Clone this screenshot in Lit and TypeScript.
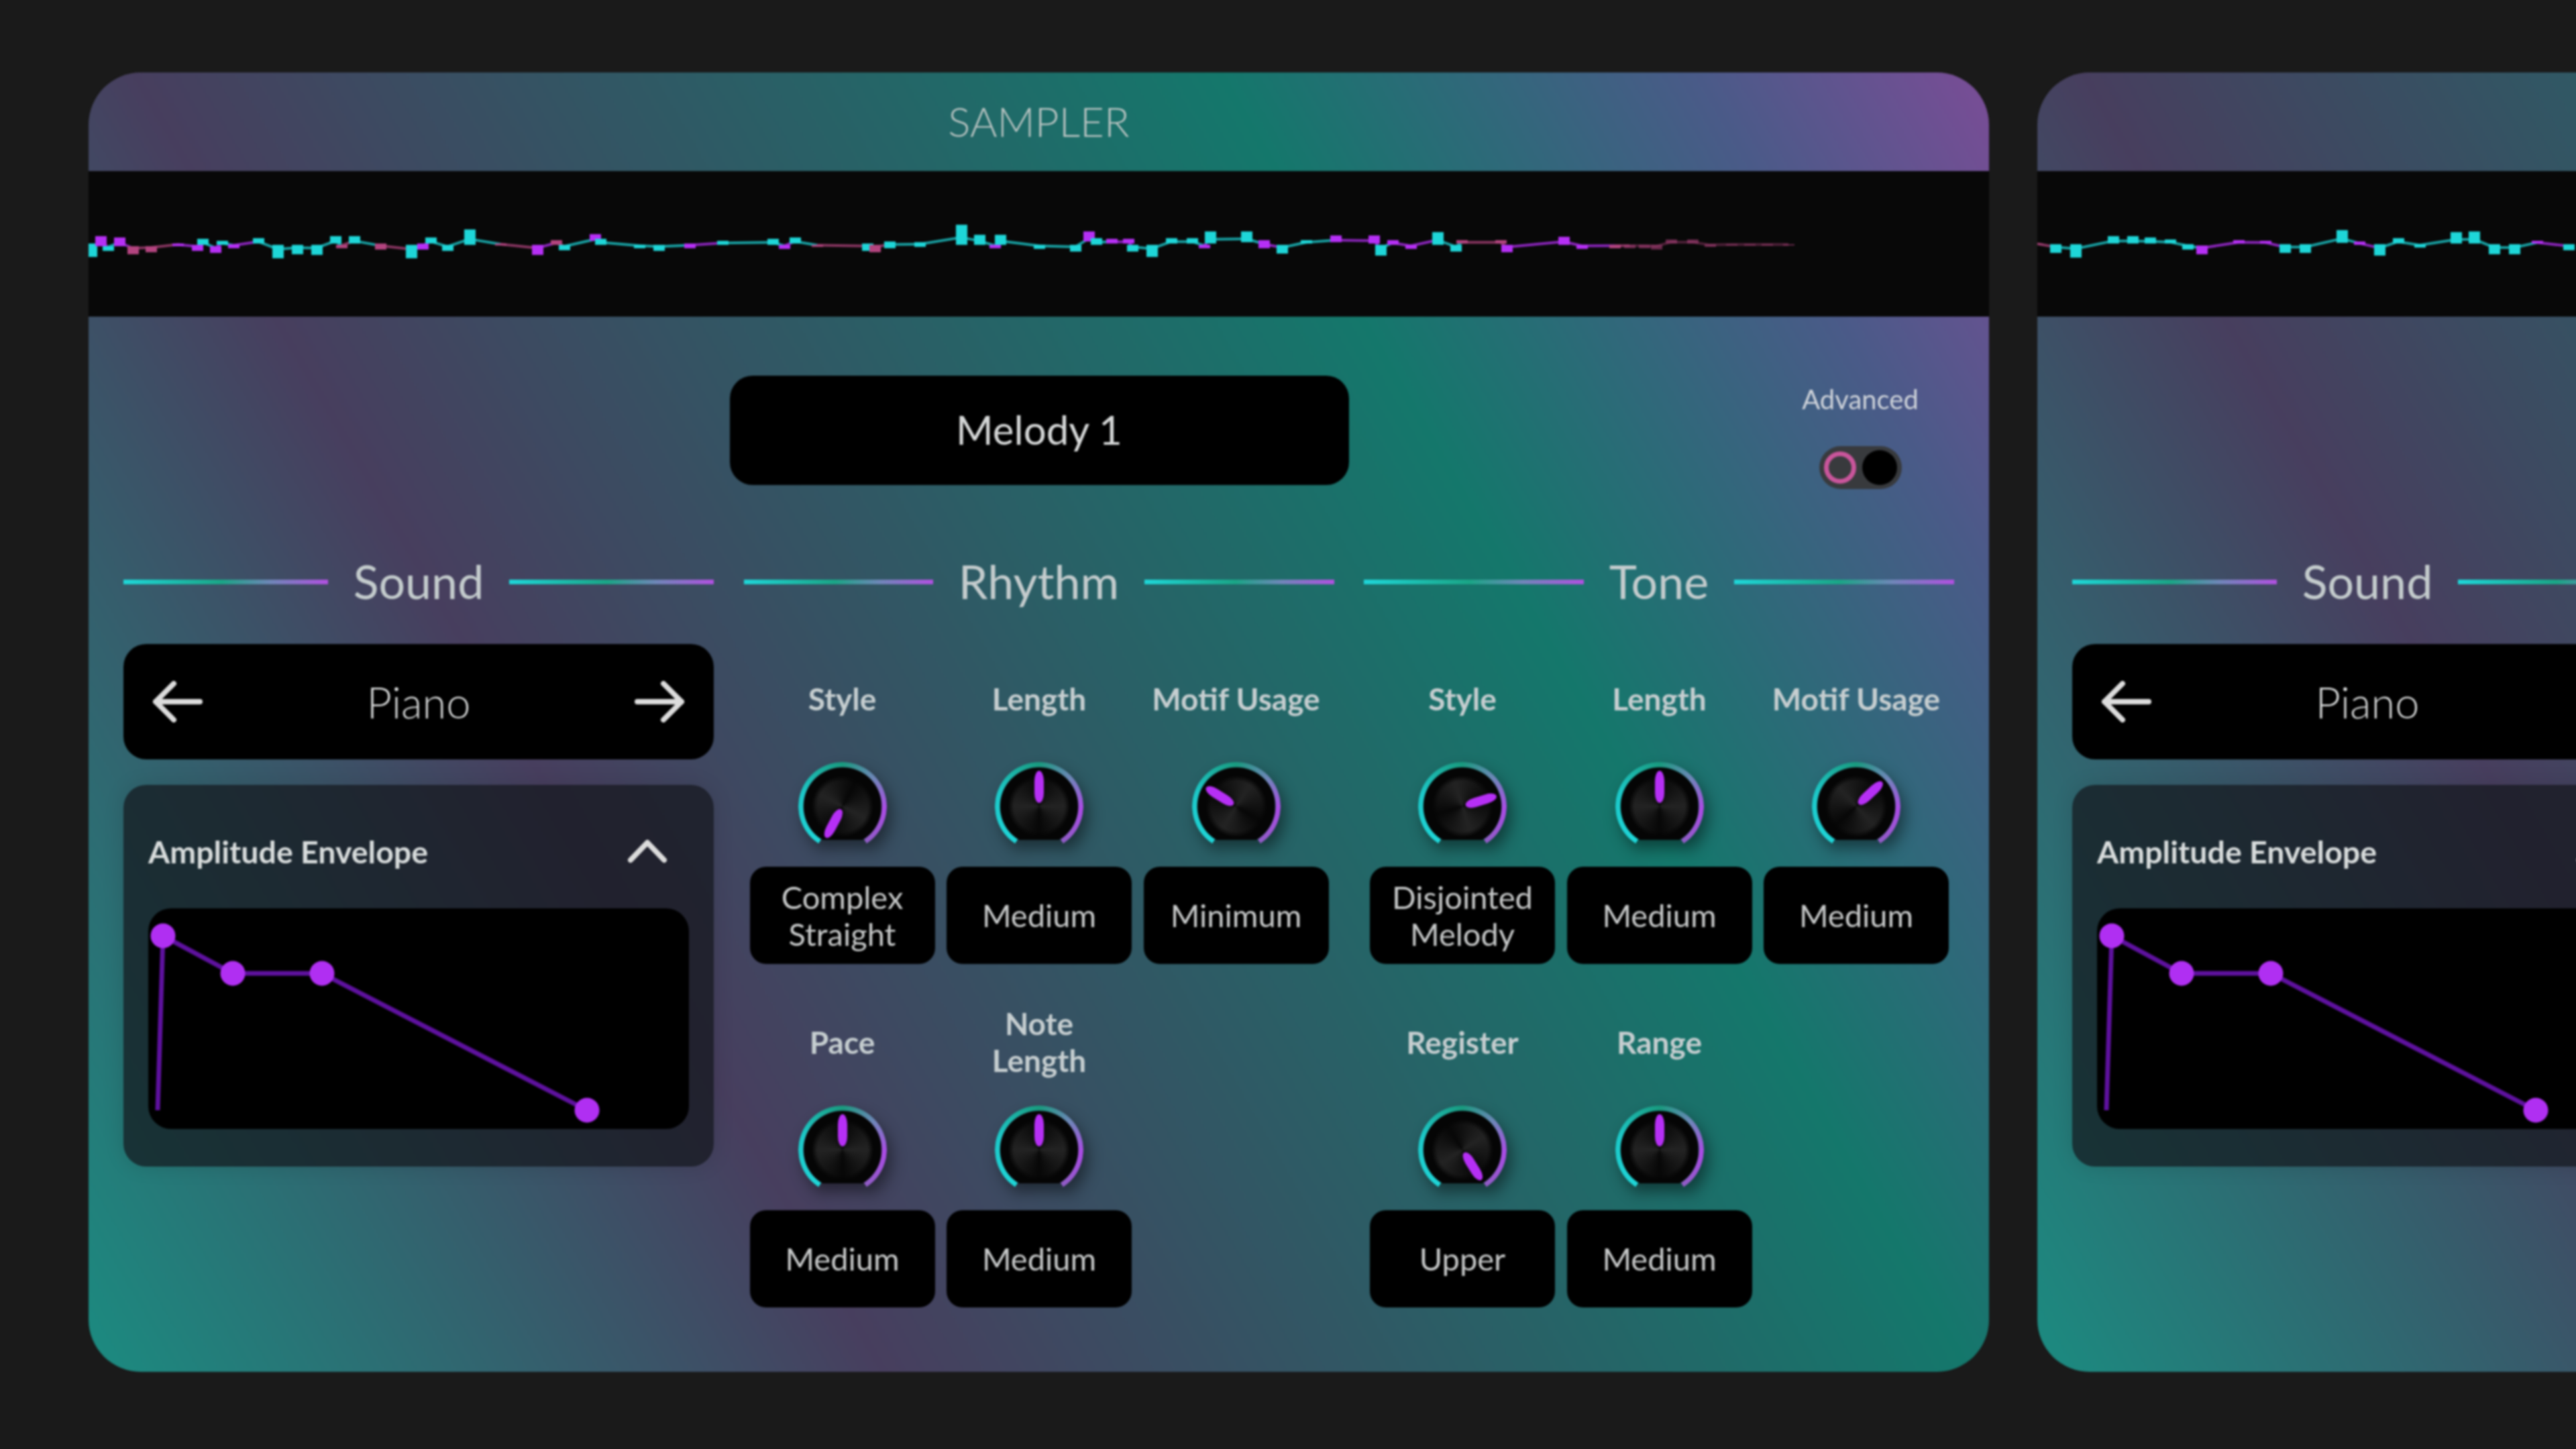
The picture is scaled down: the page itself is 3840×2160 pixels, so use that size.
import { LitElement, css, html, svg } from "lit";
import { customElement, property } from "lit/decorators.js";

type Bar = [x: number, top: number, bottom: number, color: string];

const C = "#1ed6d8";
const P = "#b62ff5";
const K = "#b3447f";

const WAVE_A: Bar[] = [
  [4, 0, 20, C], [18, -11, 4, P], [29, 4, 11, C], [46, -9, 4, P], [66, 4, 16, K], [93, 4, 13, K],
  [133, 0, 4, P], [162, 2, 11, P], [170, -7, 2, C], [189, 4, 14, P], [199, -4, 2, C], [216, 1, 7, P],
  [253, -8, 0, C], [282, 2, 22, C], [311, 2, 16, C], [340, 2, 17, C], [368, -11, 0, C], [377, 2, 7, K],
  [396, -11, 0, C], [435, 0, 9, K], [481, 2, 22, C], [498, 0, 9, P], [510, -9, 0, C], [535, 2, 11, C],
  [568, -21, 2, C], [614, 0, 3, K], [669, 2, 17, P], [697, -5, 2, K], [709, 2, 10, C], [755, -14, -4, P],
  [763, -7, 2, C], [821, 2, 7, C], [850, 2, 11, C], [896, 0, 7, P], [945, -4, 2, C], [1020, -7, 2, C],
  [1037, 2, 8, P], [1053, -9, 0, C], [1086, 2, 5, K], [1161, 0, 11, C],
  [1172, 2, 13, K], [1194, -3, 7, C], [1239, -2, 5, C], [1301, -28, 2, C], [1328, -13, 2, C], [1351, 2, 7, P],
  [1359, -13, 2, C], [1417, 2, 8, C], [1471, 2, 12, C], [1491, -18, -3, P], [1502, -8, 2, C], [1525, -7, 0, P],
  [1550, -7, 0, P], [1556, 2, 12, C], [1585, 2, 20, C], [1614, -8, 0, C], [1645, -8, 0, C], [1663, 2, 7, P],
  [1672, -18, 0, C], [1726, -18, -2, C], [1752, -5, 7, P], [1779, 2, 15, C], [1815, -5, 0, C], [1859, -12, -2, P],
  [1916, -12, 0, P], [1926, 2, 18, C], [1944, -5, 2, P], [1971, 2, 8, P], [2011, -17, 2, C], [2038, 2, 12, C],
  [2047, -5, 0, K], [2105, -5, 0, K], [2114, 2, 13, P], [2199, -10, 2, P], [2226, 2, 8, P], [2275, 2, 7, K],
  [2297, 2, 7, K], [2319, 2, 7, K], [2337, 2, 9, K], [2359, -6, 0, K], [2391, -6, 0, K], [2417, 1, 5, K],
  [2449, 1, 3, K], [2476, 1, 3, K], [2502, 1, 3, K], [2534, 1, 3, K],
];

const WAVE_B: Bar[] = [
  [0, 0, 1, K], [27, 1, 14, C], [57, 1, 21, C], [113, -11, 0, C], [142, -11, 0, C], [168, -9, 0, C], [198, -6, 0, C],
  [224, 1, 9, C], [245, 3, 16, P], [300, -5, 0, P], [340, -4, 0, P], [369, 1, 14, C], [399, 1, 14, C],
  [454, -20, -1, C], [480, -3, 2, P], [510, 1, 18, C], [538, -8, 0, C], [570, 1, 6, C], [624, -17, 0, C],
  [651, -18, 0, C], [681, 1, 16, C], [711, 1, 16, C], [745, -4, 0, P], [792, 1, 10, C],
];

@customElement("wave-strip")
class WaveStrip extends LitElement {
  @property({ attribute: false }) bars: Bar[] = [];

  static styles = css`
    :host {
      display: block;
      height: 217px;
      background: #080808;
    }
    svg {
      display: block;
      width: 100%;
      height: 100%;
    }
    .link {
      fill: none;
      stroke-width: 4;
    }
  `;

  render() {
    const mid = 108;
    return html`<svg viewBox="0 0 2833 217" preserveAspectRatio="none">
      ${this.bars.map(([x, top, bottom, color], i) => {
        const next = this.bars[i + 1];
        const y = mid + (top + bottom) * 0.35;
        // the tail of the sample dies away
        const fade = x > 2280 ? 0.55 : 1;
        const link = next
          ? svg`<line class="link" x1=${x} y1=${y} x2=${next[0]} y2=${mid + (next[1] + next[2]) * 0.35} stroke=${color} opacity=${0.75 * fade}></line>`
          : null;
        return svg`${link}<rect x=${x - 8} y=${mid + top} width="17" height=${bottom - top} fill=${color} opacity=${fade}></rect>`;
      })}
    </svg>`;
  }
}

@customElement("dial-knob")
class DialKnob extends LitElement {
  @property({ type: Number }) angle = 0;

  static styles = css`
    :host {
      display: block;
      position: relative;
      width: 132px;
      height: 132px;
      filter: drop-shadow(7px 12px 11px rgba(0, 0, 0, 0.45));
    }
    .ring {
      position: absolute;
      inset: 0;
      border-radius: 50%;
      background: conic-gradient(
        from 213deg,
        #1ed6d8 0deg,
        #1cc8c8 75deg,
        #189a7e 147deg,
        #6f86b8 195deg,
        #ab4be6 240deg,
        #8f5cc4 294deg,
        transparent 294deg
      );
      -webkit-mask: radial-gradient(closest-side, transparent calc(100% - 8px), #000 calc(100% - 7px));
      mask: radial-gradient(closest-side, transparent calc(100% - 8px), #000 calc(100% - 7px));
    }
    .body {
      position: absolute;
      inset: 8px;
      border-radius: 50%;
      background: #050505;
      overflow: hidden;
      clip-path: inset(0 0 8px 0);
    }
    .cap {
      position: absolute;
      inset: 12px;
      border-radius: 50%;
      background: conic-gradient(#070707 0deg, #232323 90deg, #070707 180deg, #232323 270deg, #070707 360deg);
      -webkit-mask: radial-gradient(closest-side, #000 82%, transparent 100%);
      mask: radial-gradient(closest-side, #000 82%, transparent 100%);
    }
    .arm {
      position: absolute;
      inset: 0;
    }
    .pointer {
      position: absolute;
      left: 50%;
      top: 13px;
      width: 14px;
      height: 48px;
      margin-left: -7px;
      border-radius: 7px / 15px;
      background: #b62ff5;
    }
  `;

  render() {
    const turn = `transform: rotate(${this.angle}deg)`;
    return html`
      <div class="ring"></div>
      <div class="body"><div class="cap" style=${turn}></div></div>
      <div class="arm" style=${turn}><div class="pointer"></div></div>
    `;
  }
}

@customElement("sampler-card")
class SamplerCard extends LitElement {
  @property({ attribute: false }) wave: Bar[] = [];
  // the next card only peeks in at the page edge, so only its first column is drawn
  @property({ type: Boolean }) peek = false;

  static styles = css`
    :host {
      display: block;
      flex: 0 0 2833px;
      height: 1937px;
      border-radius: 78px;
      overflow: hidden;
      color: #d6d8d8;
      font-family: Lato, "Open Sans", sans-serif;
      background: linear-gradient(60deg, #1b8b80 0%, #473e5e 30%, #14776b 71%, #4a5a88 89%, #7a4c96 100%);
      filter: blur(1.7px);
    }
    .title {
      height: 147px;
      box-sizing: border-box;
      padding-bottom: 3px;
      display: flex;
      align-items: center;
      justify-content: center;
      font-size: 62px;
      font-weight: 300;
      color: #b9c4c2;
    }
    .body {
      padding: 88px 51px 0 52px;
    }
    .top {
      display: grid;
      grid-template-columns: 1fr 923px 1fr;
      grid-template-rows: 163px;
    }
    .preset {
      grid-column: 2;
      display: flex;
      align-items: center;
      justify-content: center;
      border-radius: 34px;
      background: #000;
      font-size: 60px;
      padding-bottom: 3px;
    }
    .advanced {
      justify-self: end;
      width: 282px;
      display: flex;
      flex-direction: column;
      align-items: center;
      font-size: 40px;
      line-height: 46px;
      color: #ced3da;
      padding-top: 12px;
    }
    .toggle {
      margin-top: 47px;
      width: 123px;
      height: 64px;
      box-sizing: border-box;
      padding: 6px 7px;
      display: flex;
      align-items: center;
      justify-content: space-between;
      border-radius: 32px;
      background: #383a3d;
    }
    .toggle .on {
      width: 48px;
      height: 48px;
      box-sizing: border-box;
      border-radius: 50%;
      border: 7px solid #c9559b;
    }
    .toggle .off {
      width: 52px;
      height: 52px;
      border-radius: 50%;
      background: #000;
    }
    .sections {
      margin-top: 106px;
      display: grid;
      grid-template-columns: repeat(3, 880px);
      column-gap: 44.5px;
    }
    .head {
      height: 74px;
      display: flex;
      align-items: center;
      gap: 38px;
      font-size: 70px;
      color: #c4cccd;
    }
    .head i {
      flex: 1;
      height: 7px;
      margin-top: 2px;
      background: linear-gradient(90deg, #1ed6d8 0%, #1aa586 48%, #6f86b8 72%, #b050e0 100%);
    }
    .bar {
      margin-top: 57px;
      height: 172px;
      padding: 0 43px;
      display: flex;
      align-items: center;
      justify-content: space-between;
      border-radius: 34px;
      background: #000;
      font-size: 65px;
      font-weight: 300;
    }
    .bar svg {
      width: 75px;
      height: 62px;
    }
    .panel {
      margin-top: 38px;
      height: 569px;
      box-sizing: border-box;
      padding: 0 37px;
      border-radius: 34px;
      background: rgba(20, 22, 28, 0.72);
      box-shadow: 0 0 30px rgba(0, 0, 0, 0.12);
    }
    .panel-head {
      height: 184px;
      box-sizing: border-box;
      padding-top: 14px;
      display: flex;
      align-items: center;
      justify-content: space-between;
      font-size: 46.5px;
      font-weight: 700;
      color: #d8dcdc;
    }
    .panel-head svg {
      width: 62px;
      height: 40px;
      margin-right: 31px;
    }
    .plot {
      display: block;
      width: 806px;
      height: 329px;
      border-radius: 34px;
      background: #000;
    }
    .controls {
      margin-top: 83px;
      padding: 0 9px;
      display: grid;
      grid-template-columns: repeat(3, 276px);
      column-gap: 17.5px;
      row-gap: 61px;
    }
    .control {
      display: flex;
      flex-direction: column;
      align-items: center;
    }
    .label {
      height: 110px;
      display: flex;
      align-items: center;
      text-align: center;
      white-space: pre-line;
      font-size: 46px;
      line-height: 55px;
      font-weight: 700;
      color: #c6ced0;
    }
    dial-knob {
      margin: 40px 0 24px;
    }
    .value {
      width: 100%;
      height: 145px;
      display: flex;
      align-items: center;
      justify-content: center;
      text-align: center;
      border-radius: 24px;
      background: #000;
      font-size: 47px;
      line-height: 55px;
      color: #c6c8c8;
    }
  `;

  private section(name: string, body: unknown) {
    return html`<section>
      <div class="head"><i></i><span>${name}</span><i></i></div>
      ${body}
    </section>`;
  }

  private control(label: string, angle: number, value: string) {
    return html`<div class="control">
      <div class="label">${label}</div>
      <dial-knob .angle=${angle}></dial-knob>
      <div class="value">${value}</div>
    </div>`;
  }

  private sound() {
    const arrow = "fill:none;stroke:#dcdcdc;stroke-width:8;stroke-linecap:round;stroke-linejoin:round";
    return this.section(
      "Sound",
      html`
        <div class="bar">
          <svg viewBox="0 0 75 62"><path style=${arrow} d="M71 31H5M32 4 5 31l27 27"></path></svg>
          <span>Piano</span>
          <svg viewBox="0 0 75 62"><path style=${arrow} d="M4 31h66M43 4l27 27-27 27"></path></svg>
        </div>
        <div class="panel">
          <div class="panel-head">
            Amplitude Envelope
            <svg viewBox="0 0 62 40"><path style=${arrow} d="M6 33 31 7l25 26"></path></svg>
          </div>
          <svg class="plot" viewBox="0 0 806 329">
            <path d="M14 301 22 41 126 97H259L654 301" fill="none" stroke="#5e119e" stroke-width="7"></path>
            <circle cx="22" cy="41" r="18.5" fill="#b02ff2"></circle>
            <circle cx="126" cy="97" r="18.5" fill="#b02ff2"></circle>
            <circle cx="259" cy="97" r="18.5" fill="#b02ff2"></circle>
            <circle cx="654" cy="301" r="18.5" fill="#b02ff2"></circle>
          </svg>
        </div>
      `
    );
  }

  render() {
    if (this.peek) {
      return html`
        <div class="title"></div>
        <wave-strip .bars=${this.wave}></wave-strip>
        <div class="body">
          <div class="top"></div>
          <div class="sections">${this.sound()}</div>
        </div>
      `;
    }
    return html`
      <div class="title">SAMPLER</div>
      <wave-strip .bars=${this.wave}></wave-strip>
      <div class="body">
        <div class="top">
          <div class="preset">Melody 1</div>
          <div class="advanced">
            Advanced
            <div class="toggle"><div class="on"></div><div class="off"></div></div>
          </div>
        </div>
        <div class="sections">
          ${this.sound()}
          ${this.section(
            "Rhythm",
            html`<div class="controls">
              ${this.control("Style", -152, "Complex Straight")}
              ${this.control("Length", 0, "Medium")}
              ${this.control("Motif Usage", -58, "Minimum")}
              ${this.control("Pace", 0, "Medium")}
              ${this.control("Note\nLength", 0, "Medium")}
            </div>`
          )}
          ${this.section(
            "Tone",
            html`<div class="controls">
              ${this.control("Style", 73, "Disjointed Melody")}
              ${this.control("Length", 0, "Medium")}
              ${this.control("Motif Usage", 47, "Medium")}
              ${this.control("Register", 148, "Upper")}
              ${this.control("Range", 0, "Medium")}
            </div>`
          )}
        </div>
      </div>
    `;
  }
}

@customElement("app-root")
export class AppRoot extends LitElement {
  static styles = css`
    :host {
      display: flex;
      gap: 72px;
      box-sizing: border-box;
      width: 3840px;
      height: 2160px;
      padding: 108px 0 0 132px;
      overflow: hidden;
      background: #1a1a1a;
    }
  `;

  render() {
    return html`
      <sampler-card .wave=${WAVE_A}></sampler-card>
      <sampler-card .wave=${WAVE_B} peek></sampler-card>
    `;
  }
}
